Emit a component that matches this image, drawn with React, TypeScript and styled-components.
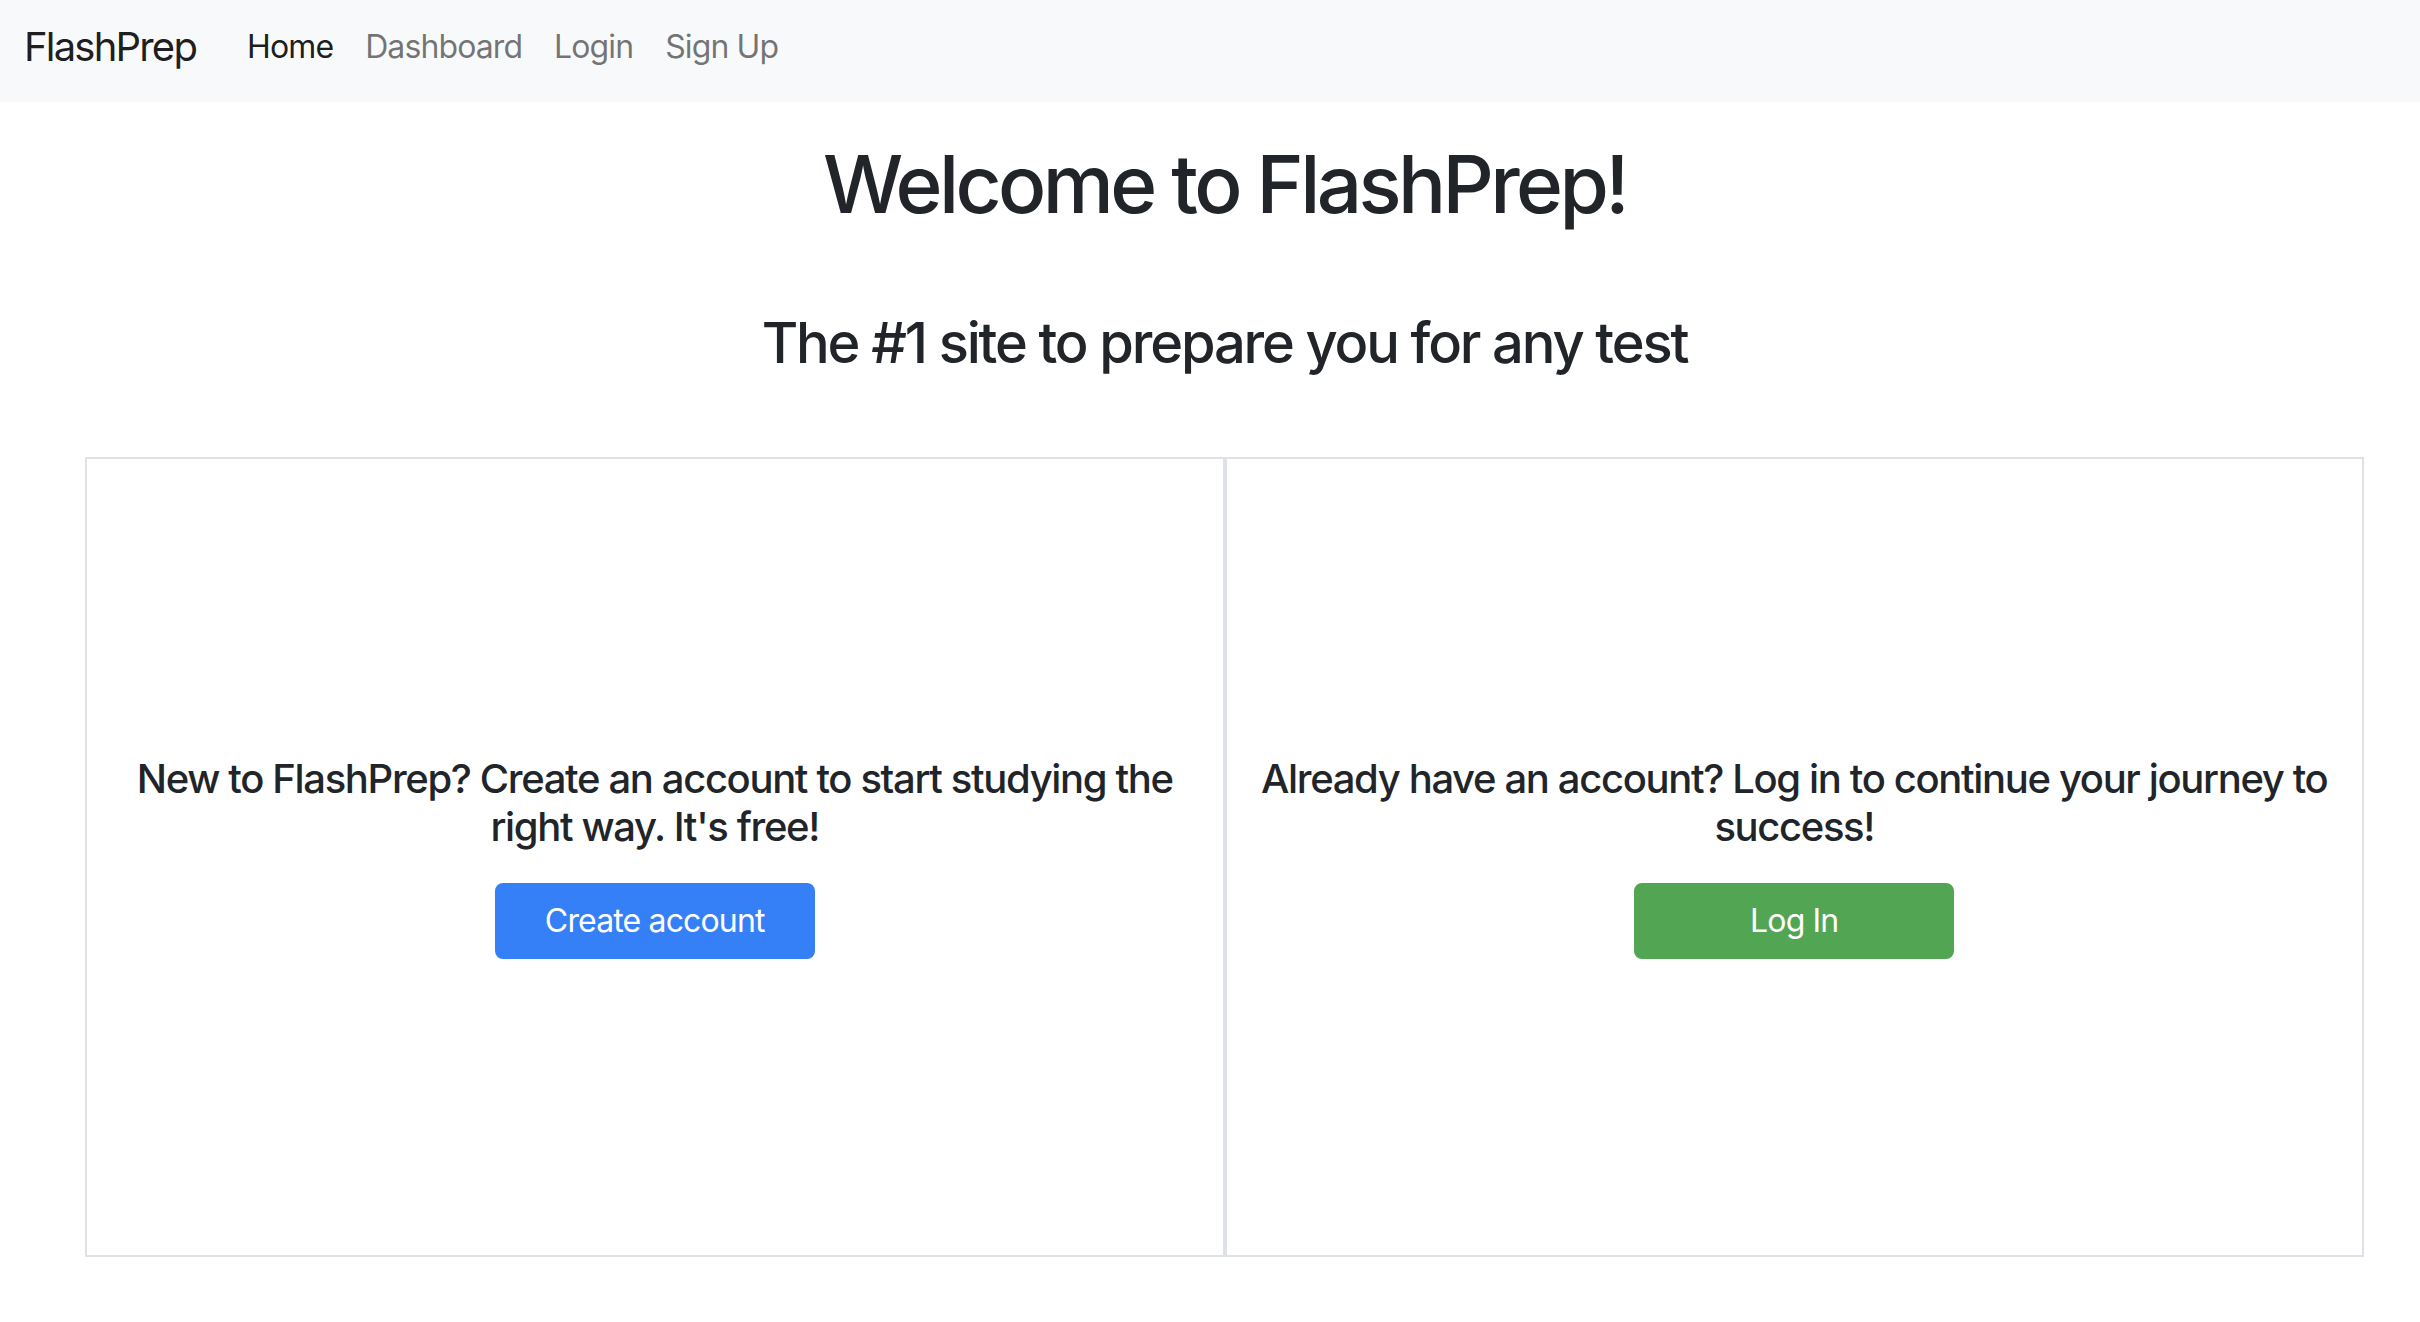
import React from "react";
import styled, { createGlobalStyle } from "styled-components";

const GlobalStyle = createGlobalStyle`
  html, body {
    margin: 0;
    padding: 0;
    background: #ffffff;
  }
  body {
    font-family: Inter, "Liberation Sans", "Noto Sans", sans-serif;
    color: #212529;
    -webkit-font-smoothing: antialiased;
  }
  * { box-sizing: border-box; }
`;

const Navbar = styled.nav`
  height: 102px;
  background: #f8f9fa;
  display: flex;
  align-items: center;
  padding: 0 24px 8px 24px;
`;

const Brand = styled.a`
  font-size: 40px;
  line-height: 48px;
  color: rgba(0, 0, 0, 0.9);
  text-decoration: none;
  margin-right: 35px;
  letter-spacing: -1.8px;
`;

const NavList = styled.div`
  display: flex;
  align-items: center;
`;

const NavLink = styled.a<{ $active?: boolean }>`
  font-size: 32px;
  line-height: 48px;
  padding: 0 16px;
  text-decoration: none;
  color: ${(p) => (p.$active ? "rgba(0, 0, 0, 0.9)" : "rgba(0, 0, 0, 0.55)")};
  letter-spacing: -0.9px;
`;

const Main = styled.main`
  margin-left: 85px;
  width: 2279px;
  display: flex;
  flex-direction: column;
  align-items: stretch;
`;

const Title = styled.h1`
  margin: 34px 0 0 0;
  font-size: 80px;
  line-height: 96px;
  font-weight: 500;
  text-align: center;
  color: #212529;
  letter-spacing: -3.6px;
`;

const Subtitle = styled.h3`
  margin: 78px 0 0 0;
  font-size: 56px;
  line-height: 67px;
  font-weight: 500;
  text-align: center;
  color: #212529;
  letter-spacing: -2.15px;
`;

const CardRow = styled.div`
  margin-top: 80px;
  display: grid;
  grid-template-columns: 1fr 1fr;
`;

const Card = styled.section`
  height: 800px;
  border: 2px solid #dee2e6;
  display: flex;
  flex-direction: column;
  align-items: center;
  justify-content: center;
  padding: 0 32px;
`;

const CardText = styled.h5`
  margin: 0 0 32px 0;
  font-size: 40px;
  line-height: 48px;
  font-weight: 500;
  text-align: center;
  color: #212529;
  letter-spacing: -1.35px;
`;

const ActionButton = styled.button<{ $tone: "primary" | "success" }>`
  width: 320px;
  height: 76px;
  border: 2px solid ${(p) => (p.$tone === "primary" ? "#3580f6" : "#52a552")};
  background: ${(p) => (p.$tone === "primary" ? "#3580f6" : "#52a552")};
  color: #ffffff;
  border-radius: 8px;
  font-family: inherit;
  font-size: 32px;
  line-height: 48px;
  font-weight: 400;
  padding: 12px 24px;
  cursor: pointer;
  letter-spacing: -0.85px;
`;

export default function App() {
  return (
    <>
      <GlobalStyle />
      <Navbar>
        <Brand href="#">FlashPrep</Brand>
        <NavList>
          <NavLink href="#" $active>
            Home
          </NavLink>
          <NavLink href="#">Dashboard</NavLink>
          <NavLink href="#">Login</NavLink>
          <NavLink href="#">Sign Up</NavLink>
        </NavList>
      </Navbar>
      <Main>
        <Title>Welcome to FlashPrep!</Title>
        <Subtitle>The #1 site to prepare you for any test</Subtitle>
        <CardRow>
          <Card>
            <CardText>
              New to FlashPrep? Create an account to start studying the right way. It's free!
            </CardText>
            <ActionButton $tone="primary">Create account</ActionButton>
          </Card>
          <Card>
            <CardText>
              Already have an account? Log in to continue your journey to success!
            </CardText>
            <ActionButton $tone="success">Log In</ActionButton>
          </Card>
        </CardRow>
      </Main>
    </>
  );
}
